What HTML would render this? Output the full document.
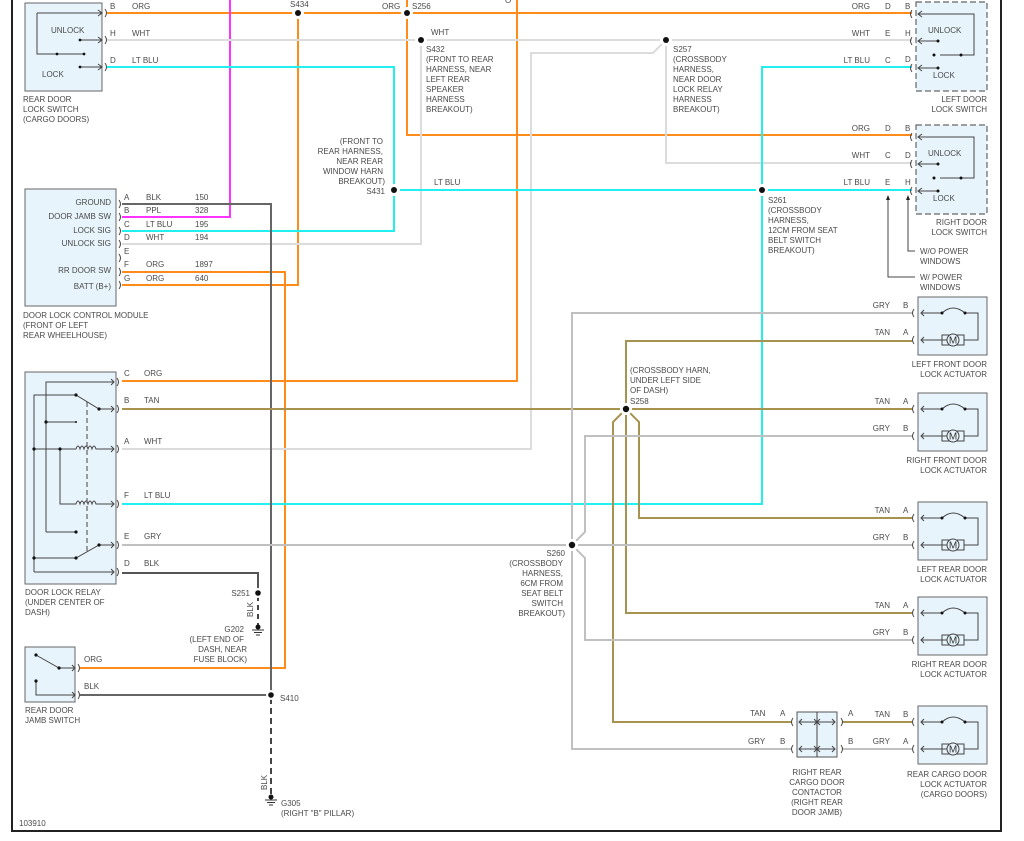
<!DOCTYPE html>
<html><head><meta charset="utf-8"><style>
html,body{margin:0;padding:0;background:#fff;width:1024px;height:841px;overflow:hidden}
svg{display:block}
text{font-family:"Liberation Sans",sans-serif;font-size:8px;fill:#4a4a4a}
</style></head><body>
<svg width="1024" height="841" viewBox="0 0 1024 841" xmlns="http://www.w3.org/2000/svg">
<defs>
<g id="act">
<rect x="0" y="0" width="69" height="58" fill="#e8f4fc" stroke="#666" stroke-width="1"/>
<path d="M-4 12 q-3 4 0 8 M-4 39 q-3 4 0 8" fill="none" stroke="#444" stroke-width="1"/>
<path d="M3 16 H24 M24 16 q11 -10 23 0 M47 16 H60 V43 H46 M36 43 H3 M6 13 L3 16 L6 19 M6 40 L3 43 L6 46" fill="none" stroke="#444" stroke-width="1"/>
<circle cx="24" cy="16" r="1.5" fill="#111"/><circle cx="47" cy="16" r="1.5" fill="#111"/>
<rect x="24" y="38" width="22" height="10" fill="none" stroke="#444"/>
<circle cx="35" cy="43" r="6" fill="#e8f4fc" stroke="#444"/>
<text x="35" y="46.5" text-anchor="middle" style="font-size:10px;fill:#333">M</text>
</g>
<g id="lsw">
<rect x="0" y="0" width="71" height="89" fill="#e8f4fc" stroke="#666" stroke-width="1.2" stroke-dasharray="6,3"/>
<path d="M-4 8 q-3 4 0 8 M-4 35 q-3 4 0 8 M-4 62 q-3 4 0 8" fill="none" stroke="#444"/>
<path d="M2 12 H58 V53 H24 M2 39 H22 M2 66 H22 M6 9 L2 12 L6 15 M6 36 L2 39 L6 42 M6 63 L2 66 L6 69" fill="none" stroke="#444"/>
<circle cx="22" cy="39" r="1.5" fill="#111"/><circle cx="22" cy="66" r="1.5" fill="#111"/><circle cx="18" cy="53" r="1.5" fill="#111"/><circle cx="45" cy="53" r="1.5" fill="#111"/>
<text x="12" y="31">UNLOCK</text><text x="17" y="76">LOCK</text>
</g>
</defs>

<path d="M12 0 V831 H1001 V0" fill="none" stroke="#222" stroke-width="2"/>

<g fill="none" stroke-width="2">
<path d="M107 13 H912" stroke="#ff8c1a"/>
<path d="M298 13 V285 H122" stroke="#ff8c1a"/>
<path d="M407 0 V135 H912" stroke="#ff8c1a"/>
<path d="M517 0 V381 H122" stroke="#ff8c1a"/>
<path d="M122 272 H285 V668 H80" stroke="#ff8c1a"/>
<path d="M230 0 V217 H122" stroke="#ff33ff"/>
<path d="M107 40 H912" stroke="#dcdcdc"/>
<path d="M421 40 V244 H122" stroke="#dcdcdc"/>
<path d="M666 40 L653 53 H531 V449 H122" stroke="#dcdcdc"/>
<path d="M666 40 V163 H912" stroke="#dcdcdc"/>
<path d="M107 67 H394 V231 H122" stroke="#22f0f0"/>
<path d="M394 190 H912" stroke="#22f0f0"/>
<path d="M912 67 H762 V504 H122" stroke="#22f0f0"/>
<path d="M122 204 H271 V695" stroke="#666"/>
<path d="M80 695 H271" stroke="#666"/>
<path d="M122 573 H258 V593" stroke="#555"/>
<path d="M258 596 V628" stroke="#444" stroke-dasharray="5,4"/>
<path d="M271 698 V798" stroke="#444" stroke-dasharray="6,4"/>
<path d="M122 409 H912" stroke="#a89250"/>
<path d="M626 409 V341 H912" stroke="#a89250"/>
<path d="M626 409 V613 H912" stroke="#a89250"/>
<path d="M626 409 L639 422 V518 H912" stroke="#a89250"/>
<path d="M626 409 L613 422 V722 H792" stroke="#a89250"/>
<path d="M842 722 H912" stroke="#a89250"/>
<path d="M122 545 H912" stroke="#c0c0c0"/>
<path d="M572 545 V313 H912" stroke="#c0c0c0"/>
<path d="M572 545 L585 532 V436 H912" stroke="#c0c0c0"/>
<path d="M572 545 L585 558 V640 H912" stroke="#c0c0c0"/>
<path d="M572 545 V749 H792" stroke="#c0c0c0"/>
<path d="M842 749 H912" stroke="#c0c0c0"/>
</g>
<g fill="#fff">
<circle cx="298" cy="13" r="6"/><circle cx="407" cy="13" r="6"/><circle cx="421" cy="40" r="6"/><circle cx="666" cy="40" r="6"/>
<circle cx="394" cy="190" r="6"/><circle cx="762" cy="190" r="6"/><circle cx="626" cy="409" r="6"/><circle cx="572" cy="545" r="6"/>
<circle cx="258" cy="593" r="5"/><circle cx="271" cy="695" r="5"/>
</g>
<g fill="#111">
<circle cx="298" cy="13" r="3"/><circle cx="407" cy="13" r="3"/><circle cx="421" cy="40" r="3"/><circle cx="666" cy="40" r="3"/>
<circle cx="394" cy="190" r="3"/><circle cx="762" cy="190" r="3"/><circle cx="626" cy="409" r="3.2"/><circle cx="572" cy="545" r="3.2"/>
<circle cx="258" cy="593" r="2.8"/><circle cx="271" cy="695" r="2.8"/>
</g>
<g stroke="#333" fill="none"><path d="M252 630 H264 M254 632.5 H262 M256 635 H260 M258 626 V630"/><path d="M265 800 H277 M267 802.5 H275 M269 805 H273 M271 797 V800"/></g>
<circle cx="258" cy="627" r="2.5" fill="#111"/><circle cx="271" cy="797" r="2.5" fill="#111"/>

<rect x="25" y="3" width="77" height="88" fill="#e8f4fc" stroke="#666"/>
<g fill="none" stroke="#444"><path d="M37 13 V54 H84 M37 13 H102 M80 40 H102 M80 67 H102 M98 10 L102 13 L98 16 M98 37 L102 40 L98 43 M98 64 L102 67 L98 70 M105 9 q3 4 0 8 M105 36 q3 4 0 8 M105 63 q3 4 0 8"/></g>
<circle cx="80" cy="40" r="1.4" fill="#111"/><circle cx="80" cy="67" r="1.4" fill="#111"/><circle cx="57" cy="54" r="1.4" fill="#111"/><circle cx="84" cy="54" r="1.4" fill="#111"/>
<text x="51" y="33">UNLOCK</text><text x="42" y="77">LOCK</text>
<text x="23" y="102">REAR DOOR</text><text x="23" y="112">LOCK SWITCH</text><text x="23" y="122">(CARGO DOORS)</text>
<text x="110" y="9">B</text><text x="132" y="9">ORG</text><text x="110" y="36">H</text><text x="132" y="36">WHT</text><text x="110" y="63">D</text><text x="132" y="63">LT BLU</text>

<rect x="25" y="189" width="91" height="117" fill="#e8f4fc" stroke="#666"/>
<g text-anchor="end"><text x="111" y="205">GROUND</text><text x="111" y="219">DOOR JAMB SW</text><text x="111" y="233">LOCK SIG</text><text x="111" y="246">UNLOCK SIG</text><text x="111" y="273">RR DOOR SW</text><text x="111" y="289">BATT (B+)</text></g>
<g fill="none" stroke="#444"><path d="M119 200 q3 4 0 8 M119 213 q3 4 0 8 M119 227 q3 4 0 8 M119 240 q3 4 0 8 M119 254 q3 4 0 8 M119 268 q3 4 0 8 M119 281 q3 4 0 8"/></g>
<text x="124" y="200">A</text><text x="124" y="213">B</text><text x="124" y="227">C</text><text x="124" y="240">D</text><text x="124" y="254">E</text><text x="124" y="267">F</text><text x="124" y="281">G</text>
<text x="146" y="200">BLK</text><text x="146" y="213">PPL</text><text x="146" y="227">LT BLU</text><text x="146" y="240">WHT</text><text x="146" y="267">ORG</text><text x="146" y="281">ORG</text>
<text x="195" y="200">150</text><text x="195" y="213">328</text><text x="195" y="227">195</text><text x="195" y="240">194</text><text x="195" y="267">1897</text><text x="195" y="281">640</text>
<text x="23" y="318">DOOR LOCK CONTROL MODULE</text><text x="23" y="328">(FRONT OF LEFT</text><text x="23" y="338">REAR WHEELHOUSE)</text>

<rect x="25" y="372" width="91" height="212" fill="#e8f4fc" stroke="#666"/>
<g fill="none" stroke="#444">
<path d="M46 532 V382 H114 M34 572 H114 M34 572 V395 H76 L99 409 H114 M34 449 H76 q2 -6 4 0 q2 -6 4 0 q2 -6 4 0 q2 -6 4 0 q2 -6 4 0 H114 M60 449 V504 H76 q2 -6 4 0 q2 -6 4 0 q2 -6 4 0 q2 -6 4 0 q2 -6 4 0 H114 M46 422 H76 M46 532 H76 M34 558 H76 L99 545 H114"/>
<path d="M87 402 V552" stroke-dasharray="5,3"/>
<path d="M111 379 L114 382 L111 385 M111 406 L114 409 L111 412 M111 446 L114 449 L111 452 M111 501 L114 504 L111 507 M111 542 L114 545 L111 548 M111 569 L114 572 L111 575"/>
<path d="M117 378 q3 4 0 8 M117 405 q3 4 0 8 M117 445 q3 4 0 8 M117 500 q3 4 0 8 M117 541 q3 4 0 8 M117 568 q3 4 0 8"/>
</g>
<g fill="#111"><circle cx="76" cy="395" r="1.6"/><circle cx="99" cy="409" r="1.6"/><circle cx="46" cy="422" r="1.6"/><circle cx="76" cy="422" r="1"/><circle cx="34" cy="449" r="1.6"/><circle cx="60" cy="449" r="1.6"/><circle cx="76" cy="532" r="1.6"/><circle cx="99" cy="545" r="1.6"/><circle cx="34" cy="558" r="1.6"/><circle cx="76" cy="558" r="1.6"/></g>
<text x="124" y="376">C</text><text x="144" y="376">ORG</text><text x="124" y="403">B</text><text x="144" y="403">TAN</text><text x="124" y="444">A</text><text x="144" y="444">WHT</text><text x="124" y="498">F</text><text x="144" y="498">LT BLU</text><text x="124" y="539">E</text><text x="144" y="539">GRY</text><text x="124" y="566">D</text><text x="144" y="566">BLK</text>
<text x="25" y="595">DOOR LOCK RELAY</text><text x="25" y="605">(UNDER CENTER OF</text><text x="25" y="615">DASH)</text>

<rect x="25" y="647" width="50" height="55" fill="#e8f4fc" stroke="#666"/>
<g fill="none" stroke="#444"><path d="M36 655 L59 668 H75 M36 681 V695 H75 M72 665 L75 668 L72 671 M72 692 L75 695 L72 698 M78 664 q3 4 0 8 M78 691 q3 4 0 8"/></g>
<circle cx="36" cy="655" r="1.6" fill="#111"/><circle cx="59" cy="668" r="1.6" fill="#111"/><circle cx="36" cy="681" r="1.6" fill="#111"/>
<text x="84" y="662">ORG</text><text x="84" y="689">BLK</text>
<text x="25" y="713">REAR DOOR</text><text x="25" y="723">JAMB SWITCH</text>

<text x="290" y="7">S434</text><text x="382" y="9">ORG</text><text x="412" y="9">S256</text><text x="505" y="3">O</text>
<text x="431" y="35">WHT</text>
<text x="426" y="52">S432</text><text x="426" y="62">(FRONT TO REAR</text><text x="426" y="72">HARNESS, NEAR</text><text x="426" y="82">LEFT REAR</text><text x="426" y="92">SPEAKER</text><text x="426" y="102">HARNESS</text><text x="426" y="112">BREAKOUT)</text>
<text x="673" y="52">S257</text><text x="673" y="62">(CROSSBODY</text><text x="673" y="72">HARNESS,</text><text x="673" y="82">NEAR DOOR</text><text x="673" y="92">LOCK RELAY</text><text x="673" y="102">HARNESS</text><text x="673" y="112">BREAKOUT)</text>
<g text-anchor="end"><text x="383" y="144">(FRONT TO</text><text x="383" y="154">REAR HARNESS,</text><text x="383" y="164">NEAR REAR</text><text x="383" y="174">WINDOW HARN</text><text x="385" y="184">BREAKOUT)</text><text x="385" y="194">S431</text></g>
<text x="434" y="185">LT BLU</text>
<text x="768" y="203">S261</text><text x="768" y="213">(CROSSBODY</text><text x="768" y="223">HARNESS,</text><text x="768" y="233">12CM FROM SEAT</text><text x="768" y="243">BELT SWITCH</text><text x="768" y="253">BREAKOUT)</text>
<text x="630" y="373">(CROSSBODY HARN,</text><text x="630" y="383">UNDER LEFT SIDE</text><text x="630" y="393">OF DASH)</text><text x="630" y="404">S258</text>
<g text-anchor="end"><text x="565" y="556">S260</text><text x="563" y="566">(CROSSBODY</text><text x="563" y="576">HARNESS,</text><text x="563" y="586">6CM FROM</text><text x="563" y="596">SEAT BELT</text><text x="563" y="606">SWITCH</text><text x="565" y="616">BREAKOUT)</text>
<text x="250" y="596">S251</text><text x="244" y="632">G202</text><text x="244" y="642">(LEFT END OF</text><text x="247" y="652">DASH, NEAR</text><text x="247" y="662">FUSE BLOCK)</text></g>
<text transform="translate(253 617) rotate(-90)">BLK</text>
<text transform="translate(267 790) rotate(-90)">BLK</text>
<text x="280" y="701">S410</text>
<text x="281" y="806">G305</text><text x="281" y="816">(RIGHT "B" PILLAR)</text>
<text x="19" y="826">103910</text>

<use href="#lsw" x="916" y="2"/>
<use href="#lsw" x="916" y="125"/>
<g text-anchor="end"><text x="870" y="9">ORG</text><text x="870" y="36">WHT</text><text x="870" y="63">LT BLU</text><text x="870" y="131">ORG</text><text x="870" y="158">WHT</text><text x="870" y="185">LT BLU</text></g>
<text x="885" y="9">D</text><text x="905" y="9">B</text><text x="885" y="36">E</text><text x="905" y="36">H</text><text x="885" y="63">C</text><text x="905" y="62">D</text>
<text x="885" y="131">D</text><text x="905" y="131">B</text><text x="885" y="158">C</text><text x="905" y="158">D</text><text x="885" y="185">E</text><text x="905" y="185">H</text>
<g text-anchor="end"><text x="987" y="102">LEFT DOOR</text><text x="987" y="112">LOCK SWITCH</text><text x="987" y="225">RIGHT DOOR</text><text x="987" y="235">LOCK SWITCH</text></g>
<g fill="none" stroke="#444"><path d="M908 198 V251 H915 M888 198 V277 H915"/></g>
<path d="M906 200 L908 195 L910 200 Z M886 200 L888 195 L890 200 Z" fill="#222"/>
<text x="920" y="254">W/O POWER</text><text x="920" y="264">WINDOWS</text><text x="920" y="280">W/ POWER</text><text x="920" y="290">WINDOWS</text>

<use href="#act" x="918" y="297"/>
<use href="#act" x="918" y="393"/>
<use href="#act" x="918" y="502"/>
<use href="#act" x="918" y="597"/>
<use href="#act" x="918" y="706"/>
<g text-anchor="end">
<text x="890" y="308">GRY</text><text x="890" y="335">TAN</text><text x="890" y="404">TAN</text><text x="890" y="431">GRY</text>
<text x="890" y="513">TAN</text><text x="890" y="540">GRY</text><text x="890" y="608">TAN</text><text x="890" y="635">GRY</text>
<text x="890" y="717">TAN</text><text x="890" y="744">GRY</text>
<text x="987" y="367">LEFT FRONT DOOR</text><text x="987" y="377">LOCK ACTUATOR</text>
<text x="987" y="463">RIGHT FRONT DOOR</text><text x="987" y="473">LOCK ACTUATOR</text>
<text x="987" y="572">LEFT REAR DOOR</text><text x="987" y="582">LOCK ACTUATOR</text>
<text x="987" y="667">RIGHT REAR DOOR</text><text x="987" y="677">LOCK ACTUATOR</text>
<text x="987" y="777">REAR CARGO DOOR</text><text x="987" y="787">LOCK ACTUATOR</text><text x="987" y="797">(CARGO DOORS)</text>
</g>
<text x="903" y="308">B</text><text x="903" y="335">A</text><text x="903" y="404">A</text><text x="903" y="431">B</text><text x="903" y="513">A</text><text x="903" y="540">B</text><text x="903" y="608">A</text><text x="903" y="635">B</text><text x="903" y="717">B</text><text x="903" y="744">A</text>

<rect x="797" y="712" width="40" height="45" fill="#e8f4fc" stroke="#555"/>
<g fill="none" stroke="#444"><path d="M817 712 V757 M799 722 H835 M799 749 H835 M802 719 L799 722 L802 725 M802 746 L799 749 L802 752 M832 719 L835 722 L832 725 M832 746 L835 749 L832 752 M814 719 L820 725 M820 719 L814 725 M814 746 L820 752 M820 746 L814 752 M793 718 q-3 4 0 8 M793 745 q-3 4 0 8 M841 718 q3 4 0 8 M841 745 q3 4 0 8"/></g>
<text x="750" y="716">TAN</text><text x="780" y="716">A</text><text x="748" y="744">GRY</text><text x="780" y="744">B</text>
<text x="848" y="716">A</text><text x="848" y="744">B</text>
<g text-anchor="middle"><text x="817" y="775">RIGHT REAR</text><text x="817" y="785">CARGO DOOR</text><text x="817" y="795">CONTACTOR</text><text x="817" y="805">(RIGHT REAR</text><text x="817" y="815">DOOR JAMB)</text></g>
</svg>
</body></html>
